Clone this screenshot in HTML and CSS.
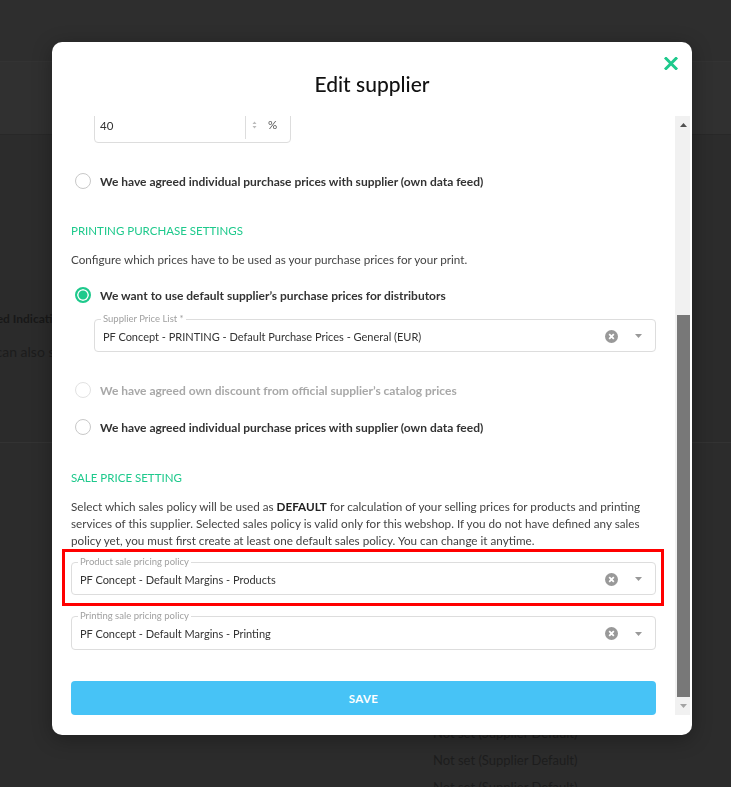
FILE: index.html
```html
<!DOCTYPE html>
<html lang="en">
<head>
    <meta charset="UTF-8">
    <meta name="viewport" content="width=device-width, initial-scale=1.0">
    <title>Edit supplier</title>
    <link rel="stylesheet" href="styles.css">
</head>
<body>
    <div class="page">
        <div class="page-top"></div>
        <div class="page-bar"></div>
        <div class="page-card">
            <div class="page-label">Required Indication</div>
            <div class="page-note">You can also set</div>
        </div>
        <div class="page-list">
            <div>Not set (Supplier Default)</div>
            <div>Not set (Supplier Default)</div>
            <div>Not set (Supplier Default)</div>
        </div>
    </div>

    <div class="overlay">
        <div class="modal">
            <div class="modal-head">
                <h2>Edit supplier</h2>
                <button class="close" type="button" aria-label="Close">
                    <svg width="14" height="13" viewBox="0 0 14 13"><path d="M2 1.5 L12 11.5 M12 1.5 L2 11.5" stroke="#1ec98c" stroke-width="3" stroke-linecap="square"/></svg>
                </button>
            </div>

            <div class="modal-body">
                <div class="modal-scroll">
                    <div class="scroll-inner">
                        <div class="num-input">
                            <span class="num-value">40</span>
                            <span class="num-side">
                                <svg class="num-spin" width="5" height="8" viewBox="0 0 5 8"><path d="M2.5 0.5 L4.5 3 L0.5 3 Z M0.5 5 L4.5 5 L2.5 7.5 Z" fill="#bbb"/></svg>
                                <span class="num-unit">%</span>
                            </span>
                        </div>

                        <label class="radio radio-first"><span class="radio-dot"></span>We have agreed individual purchase prices with supplier (own data feed)</label>

                        <h3 class="section-title">Printing purchase settings</h3>
                        <p class="section-text">Configure which prices have to be used as your purchase prices for your print.</p>

                        <label class="radio is-on radio-print"><span class="radio-dot"></span>We want to use default supplier’s purchase prices for distributors</label>

                        <fieldset class="select select-indent">
                            <legend>Supplier Price List *</legend>
                            <div class="select-row">
                                <span class="select-value">PF Concept - PRINTING - Default Purchase Prices - General (EUR)</span>
                                <svg class="select-clear" width="13" height="13" viewBox="0 0 13 13"><circle cx="6.5" cy="6.5" r="6.5" fill="#999"/><path d="M4.2 4.2 L8.8 8.8 M8.8 4.2 L4.2 8.8" stroke="#fff" stroke-width="1.8"/></svg>
                                <svg class="select-caret" width="7" height="4" viewBox="0 0 7 4"><path d="M0 0 L7 0 L3.5 4 Z" fill="#999"/></svg>
                            </div>
                        </fieldset>

                        <label class="radio is-off radio-disc"><span class="radio-dot"></span>We have agreed own discount from official supplier’s catalog prices</label>
                        <label class="radio radio-own"><span class="radio-dot"></span>We have agreed individual purchase prices with supplier (own data feed)</label>

                        <h3 class="section-title section-sale">Sale price setting</h3>
                        <p class="section-text section-long">Select which sales policy will be used as <b>DEFAULT</b> for calculation of your selling prices for products and printing services of this supplier. Selected sales policy is valid only for this webshop. If you do not have defined any sales policy yet, you must first create at least one default sales policy. You can change it anytime.</p>

                        <div class="highlight">
                            <fieldset class="select">
                                <legend>Product sale pricing policy</legend>
                                <div class="select-row">
                                    <span class="select-value">PF Concept - Default Margins - Products</span>
                                    <svg class="select-clear" width="13" height="13" viewBox="0 0 13 13"><circle cx="6.5" cy="6.5" r="6.5" fill="#999"/><path d="M4.2 4.2 L8.8 8.8 M8.8 4.2 L4.2 8.8" stroke="#fff" stroke-width="1.8"/></svg>
                                    <svg class="select-caret" width="7" height="4" viewBox="0 0 7 4"><path d="M0 0 L7 0 L3.5 4 Z" fill="#999"/></svg>
                                </div>
                            </fieldset>
                        </div>

                        <fieldset class="select select-print">
                            <legend>Printing sale pricing policy</legend>
                            <div class="select-row">
                                <span class="select-value">PF Concept - Default Margins - Printing</span>
                                <svg class="select-clear" width="13" height="13" viewBox="0 0 13 13"><circle cx="6.5" cy="6.5" r="6.5" fill="#999"/><path d="M4.2 4.2 L8.8 8.8 M8.8 4.2 L4.2 8.8" stroke="#fff" stroke-width="1.8"/></svg>
                                <svg class="select-caret" width="7" height="4" viewBox="0 0 7 4"><path d="M0 0 L7 0 L3.5 4 Z" fill="#999"/></svg>
                            </div>
                        </fieldset>

                        <button class="save" type="button">SAVE</button>
                    </div>
                </div>

                <div class="scrollbar">
                    <div class="sb-btn">
                        <svg width="7" height="4" viewBox="0 0 7 4"><path d="M0 4 L7 4 L3.5 0 Z" fill="#505050"/></svg>
                    </div>
                    <div class="sb-track"><div class="sb-thumb"></div></div>
                    <div class="sb-btn sb-down">
                        <svg width="7" height="4" viewBox="0 0 7 4"><path d="M0 0 L7 0 L3.5 4 Z" fill="#a3a3a3"/></svg>
                    </div>
                </div>
            </div>
        </div>
    </div>
</body>
</html>
```

FILE: styles.css
```css
* {
    box-sizing: border-box;
}
body {
    margin: 0;
    height: 787px;
    overflow: hidden;
    font-family: Lato, "Liberation Sans", sans-serif;
    background-color: #2c2c2c;
}

/* page behind the overlay */
.page-top {
    height: 62px;
    background-color: #2e2e2e;
    border-bottom: 1px solid #333;
}
.page-bar {
    height: 73px;
    background-color: #303030;
    border-bottom: 1px solid #282828;
}
.page-card {
    margin-top: 145px;
    height: 163px;
    padding-top: 31px;
    border-bottom: 1px solid #333;
    background-color: #2b2b2b;
}
.page-label {
    margin-left: -38px;
    font-size: 12px;
    font-weight: 700;
    color: #181818;
    white-space: nowrap;
}
.page-note {
    margin-top: 17px;
    margin-left: -31px;
    font-size: 14px;
    color: #1c1c1c;
    white-space: nowrap;
}
.page-list {
    margin-top: 277px;
    padding-left: 433px;
    font-size: 13px;
    line-height: 27px;
    color: #1d1d1d;
}

/* modal */
.overlay {
    position: fixed;
    inset: 0;
    padding-top: 42px;
}
.modal {
    position: relative;
    width: 640px;
    height: 693px;
    margin-left: 52px;
    background-color: #fff;
    border-radius: 10px;
    box-shadow: 0 4px 20px rgba(0, 0, 0, 0.3);
}
.modal-head {
    height: 74px;
    padding-top: 30px;
    text-align: center;
}
.modal-head h2 {
    margin: 0;
    font-size: 21px;
    line-height: 24px;
    font-weight: 500;
    color: #111;
}
.close {
    position: absolute;
    top: 15px;
    right: 14px;
    padding: 0;
    border: none;
    background: none;
    line-height: 0;
    cursor: pointer;
}
.modal-body {
    display: flex;
    height: 599px;
    margin-right: 2px;
}
.modal-scroll {
    flex: 1;
    overflow: hidden;
    padding: 0 19px;
}
.scroll-inner {
    display: flex;
    flex-direction: column;
    margin-top: -7px;
}

/* number input */
.num-input {
    display: flex;
    width: 197px;
    height: 34px;
    margin-left: 23px;
    border: 1px solid #ddd;
    border-radius: 4px;
    font-size: 11.5px;
    color: #333;
}
.num-value {
    flex: 1;
    padding-left: 5px;
    line-height: 32px;
}
.num-side {
    display: flex;
    align-items: center;
    width: 45px;
    margin-bottom: 3px;
    border-left: 1px solid #ddd;
    padding-left: 6px;
}
.num-unit {
    margin-left: 11px;
    color: #555;
}

/* radios */
.radio {
    display: flex;
    align-items: center;
    gap: 9px;
    height: 20px;
    margin-left: 4px;
    font-size: 12px;
    font-weight: 700;
    color: #333;
}
.radio-dot {
    flex: none;
    width: 16px;
    height: 16px;
    border: 1px solid #c8c8c8;
    border-radius: 50%;
}
.radio.is-on .radio-dot {
    border: 2px solid #1ec98c;
    background-color: #1ec98c;
    box-shadow: inset 0 0 0 1.5px #fff;
}
.radio.is-off {
    color: #a8a8a8;
}
.radio.is-off .radio-dot {
    border-color: #e2e2e2;
}
.radio-first { margin-top: 28px; }
.radio-print { margin-top: 18px; }
.radio-disc { margin-top: 28px; }
.radio-own { margin-top: 17px; }

/* sections */
.section-title {
    margin: 32px 0 0;
    font-size: 11.5px;
    line-height: 16px;
    font-weight: 400;
    text-transform: uppercase;
    color: #1ec98c;
}
.section-sale {
    margin-top: 33px;
}
.section-text {
    margin: 12px 0 0;
    font-size: 11.7px;
    line-height: 16px;
    color: #444;
}
.section-long {
    line-height: 17px;
}
.section-long b {
    color: #222;
}

/* selects */
.select {
    min-width: 0;
    margin: 0;
    padding: 0 8px 4px;
    border: 1px solid #ddd;
    border-radius: 4px;
}
.select legend {
    margin-left: -2px;
    padding: 0 2px;
    font-size: 9.5px;
    line-height: 12px;
    color: #a0a0a0;
}
.select-row {
    display: flex;
    align-items: center;
    height: 22px;
    font-size: 11px;
    color: #333;
}
.select-value {
    flex: 1;
}
.select-clear {
    margin-right: 17px;
}
.select-caret {
    margin-right: 5px;
}
.select-indent {
    margin-top: 8px;
    margin-left: 23px;
}
.highlight {
    position: relative;
    margin-top: 7px;
}
.highlight::after {
    content: '';
    position: absolute;
    top: -7px;
    bottom: -11px;
    left: -9px;
    right: -8px;
    border: 3px solid #f00;
    pointer-events: none;
}
.select-print {
    margin-top: 15px;
}
.select-print .select-row {
    height: 23px;
}

.save {
    height: 34px;
    margin-top: 31px;
    border: none;
    border-radius: 4px;
    background-color: #47c3f6;
    color: #fff;
    font-family: inherit;
    font-size: 11.5px;
    font-weight: 700;
    letter-spacing: 0.3px;
}

/* scrollbar */
.scrollbar {
    display: flex;
    flex-direction: column;
    width: 15px;
    background-color: #f1f1f1;
}
.sb-btn {
    display: flex;
    align-items: center;
    justify-content: center;
    height: 17px;
    padding-left: 1px;
}
.sb-down {
    height: 18px;
}
.sb-track {
    flex: 1;
    display: flex;
    flex-direction: column;
    justify-content: flex-end;
}
.sb-thumb {
    height: 382px;
    margin-left: 2px;
    background-color: #787878;
}
```
